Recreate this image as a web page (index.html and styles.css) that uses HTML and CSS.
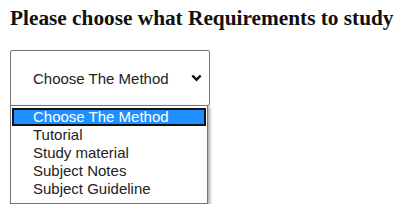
FILE: index.html
```html
<!DOCTYPE html>
<html>
<head>
<meta charset="utf-8">
<link rel="stylesheet" href="styles.css">
</head>
<body>
<h3 class="title">Please choose what Requirements to study</h3>
<div class="picker">
  <div class="select">
    <span class="select-text">Choose The Method</span>
    <svg class="chev" width="11" height="8" viewBox="0 0 11 8"><path d="M1.3 1.5 L5.5 5.7 L9.7 1.5" fill="none" stroke="#111" stroke-width="2.4"/></svg>
  </div>
  <div class="menu">
    <div class="opt active">Choose The Method</div>
    <div class="opt">Tutorial</div>
    <div class="opt">Study material</div>
    <div class="opt">Subject Notes</div>
    <div class="opt">Subject Guideline</div>
  </div>
</div>
</body>
</html>
```
FILE: styles.css
```css
html, body { margin: 0; padding: 0; background: #fff; }
body { padding: 6px 0 0 10px; }
.title {
  margin: 0;
  font-family: "Liberation Serif", "Times New Roman", serif;
  font-weight: bold;
  font-size: 21.3px;
  color: #111;
  line-height: 24px;
}
.picker { margin-top: 20px; width: 200px; }
.select {
  box-sizing: border-box;
  height: 56px;
  border: 1px solid #767676;
  border-radius: 2px;
  display: flex;
  align-items: center;
  justify-content: space-between;
  padding: 0 7px 0 22px;
  font-family: "Liberation Sans", Arial, sans-serif;
  font-size: 15px;
  color: #222;
}
.chev { display: block; }
.menu {
  margin-top: -1px;
  width: 198px;
  box-sizing: border-box;
  background: #fff;
  border: 1px solid #767676;
  padding: 2px 1px 5px 1px;
  box-shadow: 2px 2px 3px rgba(0,0,0,0.35);
  font-family: "Liberation Sans", Arial, sans-serif;
  font-size: 15px;
  color: #222;
}
.opt { height: 18px; line-height: 18px; padding-left: 21px; }
.opt.active {
  background: #1e90ff;
  color: #fff;
  outline: 2px solid #111;
  outline-offset: -2px;
}
```
